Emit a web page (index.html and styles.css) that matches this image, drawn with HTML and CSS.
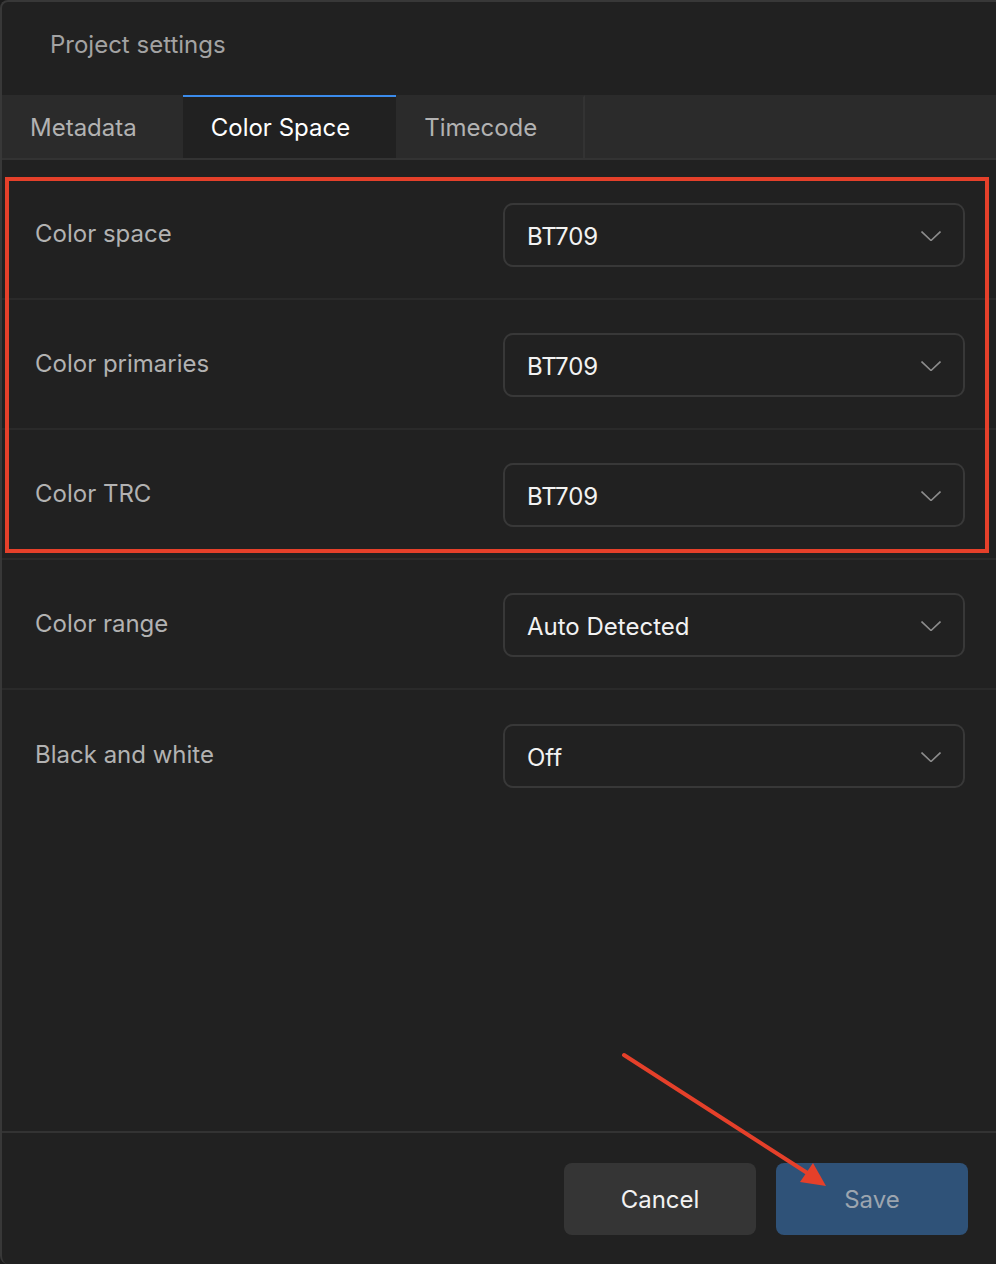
FILE: index.html
```html
<!DOCTYPE html>
<html>
<head>
  <meta charset="UTF-8">
  <title>Project settings</title>
  <link rel="stylesheet" href="styles.css">
</head>
<body>
  <div class="dialog">
    <div class="dialog-header">Project settings</div>
    <div class="tabs">
      <div class="tab">Metadata</div>
      <div class="tab active">Color Space</div>
      <div class="tab last">Timecode</div>
    </div>
    <div class="settings">
      <div class="row">
        <span class="label">Color space</span>
        <div class="select"><span>BT709</span><svg class="chevron" viewBox="0 0 20 10"><path d="M0.5 0.5 L10 9.5 L19.5 0.5"/></svg></div>
      </div>
      <div class="row">
        <span class="label">Color primaries</span>
        <div class="select"><span>BT709</span><svg class="chevron" viewBox="0 0 20 10"><path d="M0.5 0.5 L10 9.5 L19.5 0.5"/></svg></div>
      </div>
      <div class="row">
        <span class="label">Color TRC</span>
        <div class="select"><span>BT709</span><svg class="chevron" viewBox="0 0 20 10"><path d="M0.5 0.5 L10 9.5 L19.5 0.5"/></svg></div>
      </div>
      <div class="row">
        <span class="label">Color range</span>
        <div class="select"><span>Auto Detected</span><svg class="chevron" viewBox="0 0 20 10"><path d="M0.5 0.5 L10 9.5 L19.5 0.5"/></svg></div>
      </div>
      <div class="row">
        <span class="label">Black and white</span>
        <div class="select"><span>Off</span><svg class="chevron" viewBox="0 0 20 10"><path d="M0.5 0.5 L10 9.5 L19.5 0.5"/></svg></div>
      </div>
    </div>
    <div class="footer">
      <button class="btn cancel">Cancel</button>
      <button class="btn save">Save</button>
    </div>
  </div>

  <!-- annotation marks drawn over the dialog -->
  <div class="highlight"></div>
  <svg class="arrow" width="996" height="1264" viewBox="0 0 996 1264">
    <line x1="624" y1="1055" x2="812" y2="1176" stroke="#e5402a" stroke-width="4" stroke-linecap="round"/>
    <polygon points="826,1186 800,1182 813,1163" fill="#e5402a"/>
  </svg>
</body>
</html>
```

FILE: styles.css
```css
:root {
  --bg-color: #212121;
  --bar-color: #2b2b2b;
  --line-color: #333333;
  --text-color: #f2f2f2;
  --muted-color: #b2b2b2;
  --accent-color: #3b8beb;
  --mark-color: #e5402a;
}
* {
  box-sizing: border-box;
}
html, body {
  margin: 0;
  padding: 0;
  height: 100%;
  overflow: hidden;
}
body {
  background-color: #1b1b1b;
  font-family: Inter, 'Noto Sans', sans-serif;
  font-size: 24px;
  color: var(--text-color);
  position: relative;
}
.dialog {
  height: 1264px;
  width: 100%;
  background-color: var(--bg-color);
  border: 2px solid #383838;
  border-right: none;
  border-bottom: none;
  border-radius: 8px 0 0 8px;
  display: flex;
  flex-direction: column;
}
.dialog-header {
  height: 93px;
  padding: 0 0 9px 48px;
  display: flex;
  align-items: center;
  color: #a3a3a3;
}
.tabs {
  height: 65px;
  display: flex;
  background-color: var(--bar-color);
  border-bottom: 2px solid var(--line-color);
}
.tab {
  height: 100%;
  padding: 0 46px 0 28px;
  display: flex;
  align-items: center;
  color: var(--muted-color);
  border-top: 2px solid transparent;
}
.tab.active {
  background-color: var(--bg-color);
  color: #ffffff;
  border-top-color: var(--accent-color);
}
.tab.last {
  border-right: 2px solid var(--line-color);
}
.settings {
  padding-top: 10px;
  flex: 1;
}
.row {
  height: 130px;
  padding: 0 31px 0 33px;
  display: flex;
  align-items: center;
  justify-content: space-between;
  border-bottom: 2px solid #2a2a2a;
}
.row:last-child {
  border-bottom: none;
}
.label {
  color: var(--muted-color);
  margin-top: -2px;
}
.select {
  width: 462px;
  height: 64px;
  margin-top: 2px;
  border: 2px solid #383838;
  border-radius: 10px;
  padding: 2px 22px 0 22px;
  display: flex;
  align-items: center;
  justify-content: space-between;
}
.chevron {
  width: 20px;
  height: 10px;
  fill: none;
  stroke: #8c8c8c;
  stroke-width: 1.6;
}
.footer {
  border-top: 2px solid var(--line-color);
  padding: 30px 28px 29px 0;
  display: flex;
  justify-content: flex-end;
  gap: 20px;
}
.btn {
  width: 192px;
  height: 72px;
  border: none;
  border-radius: 8px;
  font-family: inherit;
  font-size: 24px;
  cursor: pointer;
}
.btn.cancel {
  background-color: #353535;
  color: var(--text-color);
}
.btn.save {
  background-color: #2f5278;
  color: #9ca5af;
}
.highlight {
  position: absolute;
  left: 5px;
  top: 177px;
  width: 984px;
  height: 376px;
  border: 4px solid var(--mark-color);
  pointer-events: none;
}
.arrow {
  position: absolute;
  left: 0;
  top: 0;
  pointer-events: none;
}
```
